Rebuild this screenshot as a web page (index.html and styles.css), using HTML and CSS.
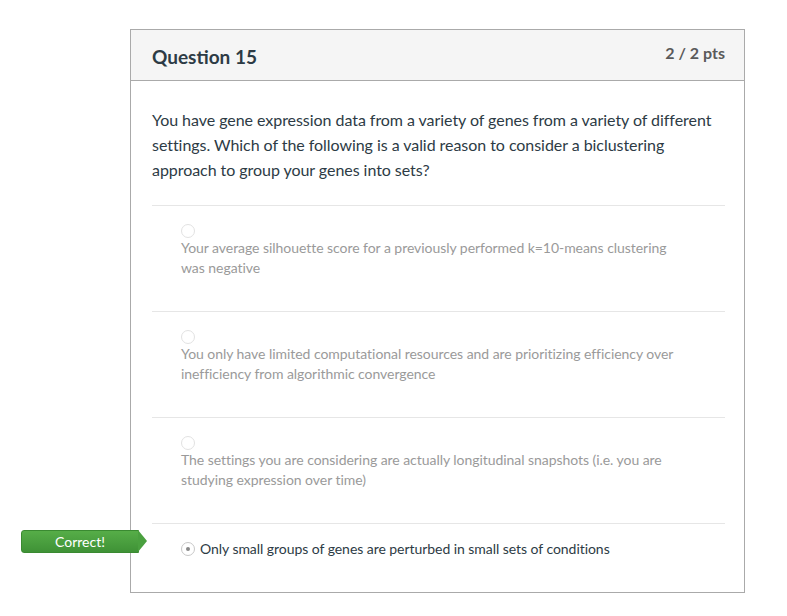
FILE: index.html
```html
<!DOCTYPE html>
<html>
<head>
<meta charset="utf-8">
<link rel="stylesheet" href="styles.css">
</head>
<body>
<div class="page">
  <div class="card">
    <div class="header">
      <span class="title">Question 15</span>
      <span class="points">2 / 2 pts</span>
    </div>
    <div class="body">
      <p class="question">You have gene expression data from a variety of genes from a variety of different settings. Which of the following is a valid reason to consider a biclustering approach to group your genes into sets?</p>
      <div class="answers">
        <div class="answer dim">
          <span class="radio"></span>
          <div class="answer-text">Your average silhouette score for a previously performed k=10-means clustering was negative</div>
        </div>
        <div class="answer dim">
          <span class="radio"></span>
          <div class="answer-text">You only have limited computational resources and are prioritizing efficiency over inefficiency from algorithmic convergence</div>
        </div>
        <div class="answer dim">
          <span class="radio"></span>
          <div class="answer-text">The settings you are considering are actually longitudinal snapshots (i.e. you are studying expression over time)</div>
        </div>
        <div class="answer selected">
          <span class="badge">Correct!</span>
          <span class="radio checked"></span>
          <span class="answer-text">Only small groups of genes are perturbed in small sets of conditions</span>
        </div>
      </div>
    </div>
  </div>
</div>
</body>
</html>
```
FILE: styles.css
```css
html, body {
  margin: 0;
  padding: 0;
  background: #fff;
}
body {
  font-family: Lato, "Open Sans", sans-serif;
  color: #2d3b45;
}
.page {
  padding: 29px 0 0 130px;
}
.card {
  width: 613px;
  border: 1px solid #aaa;
  background: #fff;
}
.header {
  display: flex;
  justify-content: space-between;
  background: #f5f5f5;
  border-bottom: 1px solid #aaa;
  height: 50px;
  padding: 0 19px 0 21px;
}
.title {
  font-size: 19px;
  font-weight: bold;
  line-height: 20px;
  padding-top: 17px;
}
.points {
  font-size: 16px;
  font-weight: bold;
  color: #5a5a5a;
  line-height: 20px;
  padding-top: 13px;
}
.body {
  padding: 0 19px 0 21px;
}
.question {
  margin: 0;
  padding: 26px 0 23px;
  font-size: 16px;
  line-height: 25px;
  letter-spacing: -0.05px;
}
.answers {
  display: flex;
  flex-direction: column;
}
.answer {
  border-top: 1px solid #e6e6e6;
  position: relative;
}
.answer.dim {
  padding: 18px 0 32px 29px;
  height: 55px;
  color: #9a9a9a;
}
.answer.dim .radio {
  display: block;
}
.answer.dim .answer-text {
  max-width: 505px;
}
.radio {
  width: 12px;
  height: 12px;
  border: 1px solid #e2e2e2;
  border-radius: 50%;
  box-sizing: content-box;
  flex: none;
}
.answer-text {
  font-size: 14px;
  line-height: 20px;
  letter-spacing: -0.05px;
}
.answer.selected {
  display: flex;
  align-items: center;
  gap: 5px;
  padding: 15px 0 33px 29px;
  color: #2d3b45;
}
.radio.checked {
  border-color: #c8c8c8;
  position: relative;
}
.radio.checked::after {
  content: "";
  position: absolute;
  left: 4px;
  top: 4px;
  width: 4px;
  height: 4px;
  border-radius: 50%;
  background: #888;
}
.badge {
  position: absolute;
  left: -131px;
  top: 6px;
  width: 118px;
  height: 23px;
  background: linear-gradient(#56ad48, #3f9236);
  border: 1px solid #3a8a31;
  border-radius: 3px 0 0 3px;
  color: #fff;
  font-size: 14px;
  line-height: 22px;
  text-align: center;
  box-sizing: border-box;
}
.badge::after {
  content: "";
  position: absolute;
  right: -9px;
  top: -1px;
  border-top: 11.5px solid transparent;
  border-bottom: 11.5px solid transparent;
  border-left: 9px solid #4aa03f;
}
```
